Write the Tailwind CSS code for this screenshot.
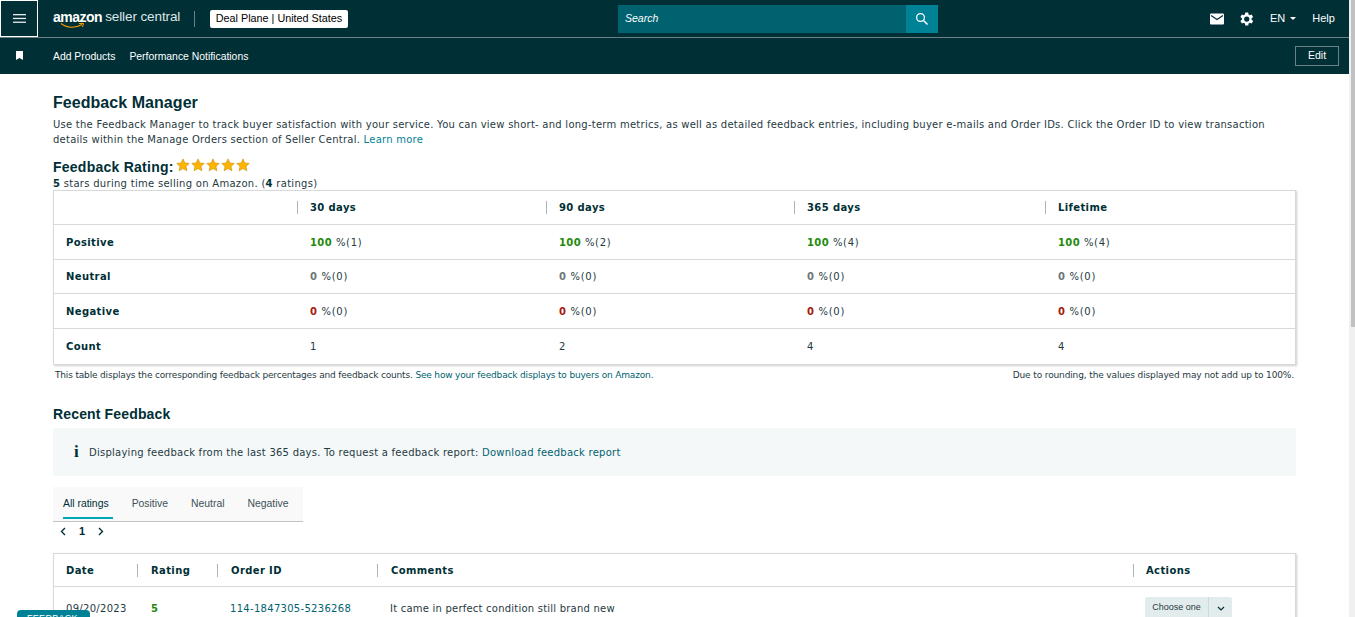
<!DOCTYPE html>
<html lang="en">
<head>
  <meta charset="UTF-8" />
  <title>Feedback Manager</title>
  <script src="https://cdn.jsdelivr.net/npm/@tailwindcss/browser@4"></script>
</head>
<body class="h-[617px] overflow-hidden bg-white font-['DejaVu_Sans',sans-serif] text-[#0f1111]">
  <div class="flex h-[617px]">
    <div class="relative w-[1349px] h-[617px] overflow-hidden">

      <!-- top nav -->
      <header class="flex h-[38px] items-center bg-[#002f36] border-b border-[#6c8185] text-white font-['Liberation_Sans',sans-serif]">
        <div class="flex h-[37px] w-[38px] items-center justify-center border border-white">
          <svg width="13" height="9" viewBox="0 0 13 9" fill="#e8eeee"><rect y="0" width="13" height="1.300"/><rect y="3.800" width="13" height="1.300"/><rect y="7.600" width="13" height="1.300"/></svg>
        </div>
        <div class="relative ml-[15px] flex h-[20px] w-[128px] items-start whitespace-nowrap">
          <span class="text-[14px] leading-[16px] font-bold tracking-[-0.5px]">amazon</span>
          <span class="ml-[3px] text-[13.5px] leading-[16px] tracking-[-0.1px] text-[#dfe6e6]">seller central</span>
          <svg class="absolute left-[7px] top-[13px]" width="26" height="7" viewBox="0 0 26 7" fill="none"><path d="M1 1.500C7 6 15 6.500 22 2.500" stroke="#ff9900" stroke-width="1.300"/><path d="M19 1.500L23.500 1.500L22.500 5" stroke="#ff9900" stroke-width="1"/></svg>
        </div>
        <div class="ml-[13px] h-[16px] w-px bg-[#6c8185]"></div>
        <div class="ml-[15px] flex h-[18px] w-[138px] items-center justify-center rounded-[2px] bg-white text-[10.8px] text-black whitespace-nowrap">Deal Plane | United States</div>
        <div class="ml-[270px] flex h-[28px] w-[320px]">
          <div class="flex flex-1 items-center bg-[#00626f] pl-[7px] text-[10.5px] italic text-white">Search</div>
          <div class="flex w-[32px] items-center justify-center bg-[#008296]">
            <svg width="14" height="14" viewBox="0 0 14 14" fill="none" stroke="#fff"><circle cx="5.500" cy="5.500" r="3.900" stroke-width="1.300"/><path d="M8.500 8.500L12.500 12.500" stroke-width="1.500"/></svg>
          </div>
        </div>
        <svg class="ml-[271px]" width="16" height="14" viewBox="0 0 16 14"><rect x="1" y="1.500" width="14" height="11" rx="1" fill="#fff"/><path d="M2 3.500L8 7.500L14 3.500" fill="none" stroke="#002f36" stroke-width="1.300"/></svg>
        <svg class="ml-[12px]" width="18" height="18" viewBox="0 0 24 24" fill="#fff"><path d="M19.400 13a7.500 7.500 0 0 0 0-2l2.100-1.600-2-3.500-2.500 1a7.500 7.500 0 0 0-1.700-1L15 3.300h-4l-.4 2.600a7.500 7.500 0 0 0-1.700 1l-2.400-1-2 3.500L6.600 11a7.500 7.500 0 0 0 0 2l-2.100 1.600 2 3.500 2.400-1a7.500 7.500 0 0 0 1.700 1l.4 2.600h4l.4-2.600a7.500 7.500 0 0 0 1.700-1l2.500 1 2-3.500zM13 15.500a3.500 3.500 0 1 1 0-7 3.500 3.500 0 0 1 0 7z"/></svg>
        <span class="ml-[15px] text-[11px]">EN</span>
        <span class="ml-[5px] h-0 w-0 border-x-[3px] border-t-[3px] border-x-transparent border-t-white"></span>
        <span class="ml-[16px] text-[11px]">Help</span>
      </header>

      <!-- bookmarks bar -->
      <nav class="flex h-[36px] items-center bg-[#002f36] text-white font-['Liberation_Sans',sans-serif] text-[10.4px]">
        <svg class="ml-[16px] -mt-[1px]" width="7" height="9" viewBox="0 0 7 9" fill="#fff"><path d="M0 0H7V9L3.500 7L0 9Z"/></svg>
        <span class="ml-[30px] mt-[2px]">Add Products</span>
        <span class="ml-[14px] mt-[2px]">Performance Notifications</span>
        <span class="ml-auto mr-[10px] flex h-[20px] w-[44px] items-center justify-center border border-[#6c8185] text-[10.5px]">Edit</span>
      </nav>

      <main class="px-[53px] w-[1296px] box-content">
        <h1 class="mt-[20px] font-['Liberation_Sans',sans-serif] text-[16px] leading-[18px] font-bold tracking-[0.05px] text-[#002f36]">Feedback Manager</h1>
        <p class="mt-[5px] text-[10px] leading-[15px] tracking-[0.25px] text-[#1f3a3f] w-[1243px]">Use the Feedback Manager to track buyer satisfaction with your service. You can view short- and long-term metrics, as well as detailed feedback entries, including buyer e-mails and Order IDs. Click the Order ID to view transaction details within the Manage Orders section of Seller Central. <span class="text-[#008296]">Learn more</span></p>

        <div class="mt-[11px] flex items-start h-[18px]">
          <h2 class="font-['Liberation_Sans',sans-serif] text-[14px] leading-[18px] font-bold text-[#002f36] tracking-[0.25px]">Feedback Rating:</h2>
          <div class="ml-[2px] flex gap-px">
            <svg width="14" height="14" viewBox="0 0 24 24" fill="#ffb400" stroke="#c98a00" stroke-width="1"><path d="M12 1.500l3.200 7 7.500.8-5.600 5.100 1.600 7.500L12 18.100l-6.700 3.800 1.600-7.500L1.300 9.300l7.500-.8z"/></svg>
            <svg width="14" height="14" viewBox="0 0 24 24" fill="#ffb400" stroke="#c98a00" stroke-width="1"><path d="M12 1.500l3.200 7 7.500.8-5.600 5.100 1.600 7.500L12 18.100l-6.700 3.800 1.600-7.500L1.300 9.300l7.500-.8z"/></svg>
            <svg width="14" height="14" viewBox="0 0 24 24" fill="#ffb400" stroke="#c98a00" stroke-width="1"><path d="M12 1.500l3.200 7 7.500.8-5.600 5.100 1.600 7.500L12 18.100l-6.700 3.800 1.600-7.500L1.300 9.300l7.500-.8z"/></svg>
            <svg width="14" height="14" viewBox="0 0 24 24" fill="#ffb400" stroke="#c98a00" stroke-width="1"><path d="M12 1.500l3.200 7 7.500.8-5.600 5.100 1.600 7.500L12 18.100l-6.700 3.800 1.600-7.500L1.300 9.300l7.500-.8z"/></svg>
            <svg width="14" height="14" viewBox="0 0 24 24" fill="#ffb400" stroke="#c98a00" stroke-width="1"><path d="M12 1.500l3.200 7 7.500.8-5.600 5.100 1.600 7.500L12 18.100l-6.700 3.800 1.600-7.500L1.300 9.300l7.500-.8z"/></svg>
          </div>
        </div>
        <p class="mt-[1px] text-[10px] leading-[13px] tracking-[0.29px] text-[#1f3a3f]"><b class="text-[#002f36]">5</b> stars during time selling on Amazon. (<b class="text-[#002f36]">4</b> ratings)</p>

        <!-- summary table -->
        <div class="w-[1243px] border border-[#d5dbdb] shadow-[1px_1px_2px_rgba(0,0,0,0.2)] text-[10px] tracking-[0.38px] text-[#1f3a3f]">
          <div class="grid h-[34px] grid-cols-[244px_249px_248px_251px_1fr] items-center border-b border-[#d5dbdb] font-bold text-[#002f36]">
            <div class="h-[13px] border-r border-[#aab7b8]"></div>
            <div class="h-[13px] border-r border-[#aab7b8] pl-[12px] leading-[13px]">30 days</div>
            <div class="h-[13px] border-r border-[#aab7b8] pl-[12px] leading-[13px]">90 days</div>
            <div class="h-[13px] border-r border-[#aab7b8] pl-[12px] leading-[13px]">365 days</div>
            <div class="h-[13px] pl-[12px] leading-[13px]">Lifetime</div>
          </div>
          <div class="grid h-[35px] grid-cols-[244px_249px_248px_251px_1fr] items-center border-b border-[#d5dbdb] tracking-[0.7px]">
            <div class="pl-[12px] font-bold tracking-[0.38px] text-[#002f36]">Positive</div>
            <div class="pl-[12px]"><b class="tracking-[0.38px] text-[#1e8a0a]">100</b> %(1)</div>
            <div class="pl-[12px]"><b class="tracking-[0.38px] text-[#1e8a0a]">100</b> %(2)</div>
            <div class="pl-[12px]"><b class="tracking-[0.38px] text-[#1e8a0a]">100</b> %(4)</div>
            <div class="pl-[12px]"><b class="tracking-[0.38px] text-[#1e8a0a]">100</b> %(4)</div>
          </div>
          <div class="grid h-[34px] grid-cols-[244px_249px_248px_251px_1fr] items-center border-b border-[#d5dbdb] tracking-[0.7px]">
            <div class="pl-[12px] font-bold tracking-[0.38px] text-[#002f36]">Neutral</div>
            <div class="pl-[12px]"><b class="text-[#6c7778]">0</b> %(0)</div>
            <div class="pl-[12px]"><b class="text-[#6c7778]">0</b> %(0)</div>
            <div class="pl-[12px]"><b class="text-[#6c7778]">0</b> %(0)</div>
            <div class="pl-[12px]"><b class="text-[#6c7778]">0</b> %(0)</div>
          </div>
          <div class="grid h-[35px] grid-cols-[244px_249px_248px_251px_1fr] items-center border-b border-[#d5dbdb] tracking-[0.7px]">
            <div class="pl-[12px] font-bold tracking-[0.38px] text-[#002f36]">Negative</div>
            <div class="pl-[12px]"><b class="text-[#a81a0a]">0</b> %(0)</div>
            <div class="pl-[12px]"><b class="text-[#a81a0a]">0</b> %(0)</div>
            <div class="pl-[12px]"><b class="text-[#a81a0a]">0</b> %(0)</div>
            <div class="pl-[12px]"><b class="text-[#a81a0a]">0</b> %(0)</div>
          </div>
          <div class="grid h-[35px] grid-cols-[244px_249px_248px_251px_1fr] items-center">
            <div class="pl-[12px] font-bold text-[#002f36]">Count</div>
            <div class="pl-[12px]">1</div>
            <div class="pl-[12px]">2</div>
            <div class="pl-[12px]">4</div>
            <div class="pl-[12px]">4</div>
          </div>
        </div>
        <div class="mt-[3px] flex w-[1243px] justify-between px-[2px] text-[9px] leading-[14px] tracking-[-0.17px] text-[#1f3a3f]">
          <span>This table displays the corresponding feedback percentages and feedback counts. <span class="text-[#00626f]">See how your feedback displays to buyers on Amazon.</span></span>
          <span class="tracking-[-0.13px]">Due to rounding, the values displayed may not add up to 100%.</span>
        </div>

        <h2 class="mt-[23px] font-['Liberation_Sans',sans-serif] text-[14px] leading-[18px] font-bold text-[#002f36] tracking-[0.15px]">Recent Feedback</h2>
        <div class="mt-[5px] flex h-[48px] w-[1243px] items-center bg-[#f5f8f9] pl-[21px] text-[10px] tracking-[0.25px] text-[#1f3a3f]">
          <span class="w-[15px] font-['Liberation_Serif',serif] text-[17px] font-bold text-[#002f36]">i</span>
          <span>Displaying feedback from the last 365 days. To request a feedback report: <span class="text-[#00626f]">Download feedback report</span></span>
        </div>

        <!-- tabs -->
        <div class="mt-[11px] flex h-[35px] w-[250px] items-start gap-[23px] border-b border-[#bfc5c5] bg-[#f9f9f9] pl-[10px] font-['Liberation_Sans',sans-serif] text-[10.4px] text-[#3c5257]">
          <span class="h-[32px] border-b-2 border-[#00a8b5] pr-[4px] pt-[9px] text-[#002f36]">All ratings</span>
          <span class="-ml-[4px] pt-[9px]">Positive</span>
          <span class="pt-[9px]">Neutral</span>
          <span class="pt-[9px]">Negative</span>
        </div>
        <div class="mt-[1px] flex h-[16px] items-center pl-[7px] font-['Liberation_Sans',sans-serif] text-[11px] text-[#002f36]">
          <svg width="6" height="9" viewBox="0 0 6 9" fill="none" stroke="#002f36" stroke-width="1.400"><path d="M5 1L1.500 4.500L5 8"/></svg>
          <span class="ml-[13px] font-bold">1</span>
          <svg class="ml-[13px]" width="6" height="9" viewBox="0 0 6 9" fill="none" stroke="#002f36" stroke-width="1.400"><path d="M1 1L4.500 4.500L1 8"/></svg>
        </div>

        <!-- feedback table -->
        <div class="mt-[14px] w-[1243px] border border-[#d5dbdb] shadow-[1px_1px_2px_rgba(0,0,0,0.2)] text-[10px] tracking-[0.3px] text-[#1f3a3f]">
          <div class="grid h-[33px] grid-cols-[84px_80px_160px_756px_1fr] items-center border-b border-[#d5dbdb] font-bold tracking-[0.38px] text-[#002f36]">
            <div class="h-[13px] border-r border-[#aab7b8] pl-[12px] leading-[13px]">Date</div>
            <div class="h-[13px] border-r border-[#aab7b8] pl-[13px] leading-[13px]">Rating</div>
            <div class="h-[13px] border-r border-[#aab7b8] pl-[13px] leading-[13px]">Order ID</div>
            <div class="h-[13px] border-r border-[#aab7b8] pl-[13px] leading-[13px]">Comments</div>
            <div class="h-[13px] pl-[12px] leading-[13px]">Actions</div>
          </div>
          <div class="grid h-[40px] grid-cols-[84px_80px_160px_756px_1fr] items-start pt-[14px]">
            <div class="pl-[12px]">09/20/2023</div>
            <div class="pl-[13px] font-bold text-[#1e8a0a]">5</div>
            <div class="pl-[12px] text-[#00626f]">114-1847305-5236268</div>
            <div class="pl-[12px] tracking-[0.22px]">It came in perfect condition still brand new</div>
            <div class="-mt-[4px] ml-[11px] flex h-[22px] w-[87px] rounded-[2px] bg-[#e3ecec] font-['Liberation_Sans',sans-serif] text-[9px] tracking-normal">
              <span class="flex w-[64px] items-center justify-center border-r border-[#d0dada]">Choose one</span>
              <span class="flex flex-1 items-center justify-center">
                <svg width="8" height="5" viewBox="0 0 8 5" fill="none" stroke="#002f36" stroke-width="1.200"><path d="M1 1L4 4L7 1"/></svg>
              </span>
            </div>
          </div>
        </div>
      </main>

      <!-- feedback tab -->
      <div class="absolute left-[17px] top-[610px] h-[20px] w-[73px] rounded-t-[4px] bg-[#008296] pl-[10px] pt-[2px] font-['Liberation_Sans',sans-serif] text-[9px] tracking-[0.3px] text-white">FEEDBACK ↑↓</div>
    </div>

    <!-- scrollbar -->
    <div class="w-[6px] h-[617px] bg-[#f0f0f0] pl-[2px]">
      <div class="h-[327px] w-[4px] bg-[#c1c1c1]"></div>
    </div>
  </div>
</body>
</html>
